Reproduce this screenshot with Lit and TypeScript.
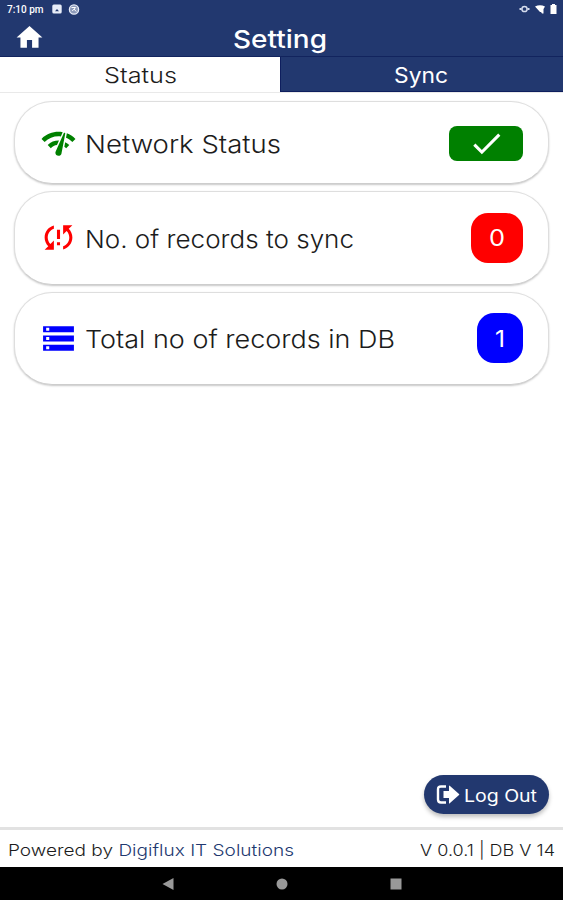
import { LitElement, html, css, svg } from "lit";
import { customElement } from "lit/decorators.js";

const ICONS = {
  home: "M10 20v-6h4v6h5v-8h3L12 3 2 12h3v8z",
  network:
    "M15.9 5c-.17 0-.32.09-.41.23l-.07.15-5.18 11.65c-.16.29-.26.61-.26.96 0 1.11.9 2.01 2.01 2.01.96 0 1.77-.68 1.96-1.59l.01-.03L16.4 5.5c0-.28-.22-.5-.5-.5zM1 9l2 2c2.88-2.88 6.79-4.08 10.53-3.62l1.19-2.68C9.89 3.84 4.74 5.27 1 9zm20 2l2-2c-1.64-1.64-3.55-2.82-5.59-3.57l-.53 2.82c1.5.62 2.9 1.53 4.12 2.75zm-4 4l2-2c-.8-.8-1.7-1.42-2.66-1.89l-.55 2.92c.42.27.83.59 1.21.97zM5 13l2 2c1.13-1.13 2.56-1.79 4.03-2l1.28-2.88c-2.63-.08-5.3.87-7.31 2.88z",
  sync: "M3 12c0 2.21.91 4.2 2.36 5.64L3 20h6v-6l-2.24 2.24C5.68 15.15 5 13.66 5 12c0-2.61 1.67-4.83 4-5.65V4.26C5.55 5.15 3 8.27 3 12zm8 5h2v-2h-2v2zM21 4h-6v6l2.24-2.24C18.32 8.85 19 10.34 19 12c0 2.61-1.67 4.83-4 5.65v2.09c3.45-.89 6-4.01 6-7.74 0-2.21-.91-4.2-2.36-5.64L21 4zm-10 9h2V7h-2v6z",
  storage:
    "M2 20h20v-4H2v4zm2-3h2v2H4v-2zM2 4v4h20V4H2zm4 3H4V5h2v2zm-4 7h20v-4H2v4zm2-3h2v2H4v-2z",
  check: "M9 16.17L4.83 12l-1.42 1.41L9 19 21 7l-1.41-1.41z",
};

const icon = (d: string, cls: string) =>
  html`<svg class="icon ${cls}" viewBox="0 0 24 24">${svg`<path d=${d} />`}</svg>`;

// A line of text set to a fixed measure, with the letterforms widened to fill it.
const wide = (text: string, width: number, cls: string, accent = "") => html`
  <svg class="wide ${cls}" width=${width} height="30">
    <text x="0" y="22" textLength=${width} lengthAdjust="spacingAndGlyphs">${text}${svg`<tspan class="brand">${accent}</tspan>`}</text>
  </svg>
`;

@customElement("app-root")
export class AppRoot extends LitElement {
  static styles = css`
    :host {
      display: flex;
      flex-direction: column;
      height: 900px;
      width: 100%;
      overflow: hidden;
      background: #fff;
      color: #1c1c1c;
      font-family: Inter, "Open Sans", sans-serif;
      font-weight: 300;
    }
    * { box-sizing: border-box; }
    svg { display: block; flex: none; }
    .icon { fill: currentColor; }
    .wide { overflow: visible; fill: currentColor; }
    .wide text { white-space: pre; }
    .statusbar {
      height: 18px;
      background: #22386f;
      color: #fff;
      display: flex;
      align-items: center;
      padding: 0 6px 0 7px;
      font: 500 10px Roboto, sans-serif;
    }
    .time { width: 45px; white-space: nowrap; }
    .left { display: flex; gap: 6px; }
    .right { margin-left: auto; display: flex; align-items: center; gap: 5px; }
    .header {
      height: 39px;
      background: #22386f;
      color: #fff;
      display: grid;
      grid-template-columns: 60px 1fr 60px;
      border-bottom: 1px solid #12245e;
    }
    .home { width: 31px; height: 31px; margin: 4px 0 0 13.5px; }
    .title {
      margin: 0;
      padding: 7.5px 3px 0 0;
      display: flex;
      justify-content: center;
      font-size: 24.5px;
      font-weight: 500;
    }
    .tabs { height: 35px; display: flex; }
    .tab {
      flex: 1;
      display: flex;
      justify-content: center;
      padding-top: 4px;
      font-size: 21.5px;
      background: #fff;
    }
    .tab.sync {
      background: #22386f;
      color: #fff;
      font-weight: 400;
      padding-right: 2px;
      border-left: 1px solid #0e1e5e;
      border-bottom: 1px solid #0e1e5e;
    }
    .main {
      flex: 1;
      display: flex;
      flex-direction: column;
      gap: 7px;
      padding: 8px 14px 0;
      border-top: 1px solid #e9e9e9;
    }
    .card {
      height: 93.5px;
      flex: none;
      border-radius: 38px;
      border: 1px solid #dedede;
      border-bottom-color: #cdcdcd;
      box-shadow: 0 1px 2px rgba(0, 0, 0, 0.22);
      display: flex;
      align-items: center;
      padding: 0 25px 0 25px;
      background: #fff;
    }
    .card.short { height: 83px; padding-top: 1px; }
    .card .icon.lead { width: 37px; height: 37px; margin-right: 7.5px; }
    .green { color: #008000; }
    .red { color: #f00; }
    .blue { color: #00f; }
    .label { font-size: 24.5px; margin-top: 6px; }
    .badge {
      margin-left: auto;
      height: 50px;
      border-radius: 17px;
      color: #fff;
      font-size: 22.5px;
      font-weight: 400;
      display: flex;
      align-items: center;
      justify-content: center;
    }
    .ok { width: 74px; height: 35px; border-radius: 8px; background: #008000; }
    .pending { width: 52px; background: #f00; padding-top: 3px; }
    .stored { width: 46px; background: #00f; padding-top: 3px; }
    .check { width: 37px; height: 37px; }
    .logout {
      margin: auto 0 13px auto;
      width: 125px;
      height: 39px;
      border: 0;
      border-radius: 20px;
      background: #22386f;
      color: #fff;
      display: flex;
      align-items: center;
      padding: 0 0 0 12px;
      gap: 4px;
      font: 400 17px Inter, sans-serif;
      box-shadow: 0 3px 4px rgba(0, 0, 0, 0.25);
    }
    .footer {
      height: 40px;
      border-top: 3px solid #e2e2e2;
      display: flex;
      justify-content: space-between;
      padding: 3.5px 8px 0 7.5px;
      font-size: 16.5px;
    }
    .brand { fill: #22386f; }
    .nav {
      height: 33px;
      background: #000;
      display: flex;
      justify-content: center;
      align-items: center;
      gap: 102px;
    }
    .nav svg { fill: #999; }
  `;

  render() {
    return html`
      <div class="statusbar">
        <span class="time">7:10 pm</span>
        <span class="left">
          <svg width="10" height="10" viewBox="0 0 10 10">
            <rect x=".3" y=".5" width="9.4" height="9" rx="1.5" fill="#e8edf8" />
            <path d="M3 7.2l2-2.2 2 2.2z" fill="#22386f" />
          </svg>
          <svg width="12" height="11" viewBox="0 0 12 11">
            <circle cx="6" cy="5.5" r="4.6" fill="#8d9aba" stroke="#e8edf8" stroke-width="1.3" />
            <path d="M3.5 3.5h4.2L4.2 7M6 5l2.2 2.5" fill="none" stroke="#fff" />
          </svg>
        </span>
        <span class="right">
          <svg width="11" height="8" viewBox="0 0 11 8">
            <circle cx="5.5" cy="4" r="2.6" fill="none" stroke="#d5dced" stroke-width="1.5" />
            <path d="M.5 4h2M8.500 4h2" stroke="#d5dced" stroke-width="2" />
          </svg>
          <svg width="10" height="9" viewBox="0 0 10 9">
            <path d="M0 1.5Q5-1 10 1.5L8.5 4v4.5H7L6 7H5z" fill="#fff" />
          </svg>
          <svg width="7" height="10" viewBox="0 0 7 10">
            <path d="M2 0h3v1h1.5v9H.5V1H2z" fill="#fff" />
          </svg>
        </span>
      </div>
      <div class="header">
        ${icon(ICONS.home, "home")}
        <h1 class="title">${wide("Setting", 94, "")}</h1>
      </div>
      <div class="tabs">
        <div class="tab">${wide("Status", 73, "")}</div>
        <div class="tab sync">${wide("Sync", 54, "")}</div>
      </div>
      <div class="main">
        <div class="card short">
          ${icon(ICONS.network, "lead green")}
          ${wide("Network Status", 196, "label")}
          <span class="badge ok">${icon(ICONS.check, "check")}</span>
        </div>
        <div class="card">
          ${icon(ICONS.sync, "lead red")}
          ${wide("No. of records to sync", 269, "label")}
          <span class="badge pending">${wide("0", 16, "")}</span>
        </div>
        <div class="card">
          ${icon(ICONS.storage, "lead blue")}
          ${wide("Total no of records in DB", 310, "label")}
          <span class="badge stored">${wide("1", 10, "")}</span>
        </div>
        <button class="logout">
          <svg width="24" height="22" viewBox="0 0 24 22">
            <path d="M10 2.500H5Q2 2.500 2 5.500V15.500Q2 18.500 5 18.500H10" fill="none" stroke="#fff" stroke-width="2.4" />
            <path d="M7.500 7H13V2Q13 1 14 2L23 10Q23.700 10.500 23 11L14 19Q13 20 13 19V14H7.500z" fill="#fff" />
          </svg>
          ${wide("Log Out", 73, "")}
        </button>
      </div>
      <div class="footer">
        ${wide("Powered by ", 286, "", "Digiflux IT Solutions")}
        ${wide("V 0.0.1 | DB V 14", 135, "")}
      </div>
      <div class="nav">
        <svg width="12" height="12" viewBox="0 0 12 12"><path d="M11.500 0v12L.5 6z" /></svg>
        <svg width="12" height="12" viewBox="0 0 12 12"><circle cx="6" cy="6" r="5.500" /></svg>
        <svg width="12" height="12" viewBox="0 0 12 12"><rect x=".5" y=".5" width="11" height="11" /></svg>
      </div>
    `;
  }
}
